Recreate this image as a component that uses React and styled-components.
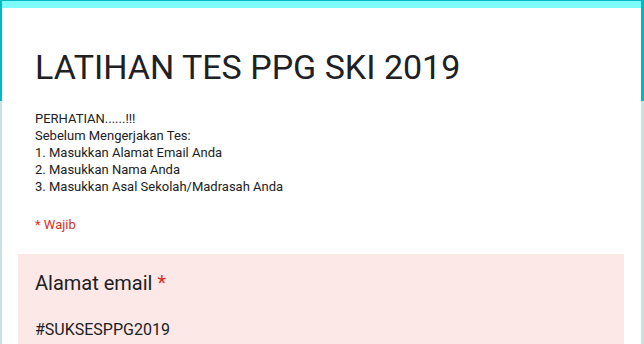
import React from "react"
import styled, { createGlobalStyle } from "styled-components"

const GlobalStyle = createGlobalStyle`
  html, body {
    margin: 0;
    padding: 0;
  }
  body {
    font-family: Roboto, "Noto Sans", Arial, sans-serif;
    background: linear-gradient(to bottom, #00b8cc 0, #00b8cc 101px, #c6e2e7 101px);
    min-height: 344px;
    overflow: hidden;
  }
`

const Page = styled.div`
  padding: 1px 3px 0 2px;
`

const Card = styled.div`
  background: #ffffff;
  border-top: 7px solid #7dfdff;
  padding-bottom: 30px;
`

const Header = styled.div`
  padding: 38px 32px 0 33px;
`

const Title = styled.h1`
  margin: 0;
  font-size: 34px;
  font-weight: 400;
  line-height: 42px;
  color: #202124;
`

const Desc = styled.div`
  margin-top: 22px;
  font-size: 13px;
  line-height: 17px;
  color: #202124;
  white-space: pre-line;
`

const Required = styled.div`
  margin-top: 21px;
  font-size: 13px;
  line-height: 17px;
  color: #d93025;
`

const Question = styled.div`
  margin: 21px 17px 0 16px;
  background: #fce8e6;
  padding: 17px 17px 24px 17px;
`

const QuestionTitle = styled.div`
  font-size: 20px;
  line-height: 24px;
  color: #202124;

  span {
    color: #d93025;
  }
`

const Answer = styled.div`
  margin-top: 25px;
  font-size: 16px;
  line-height: 20px;
  color: #202124;
`

const description = `PERHATIAN......!!!
Sebelum Mengerjakan Tes:
1. Masukkan Alamat Email Anda
2. Masukkan Nama Anda
3. Masukkan Asal Sekolah/Madrasah Anda`

export default function App() {
  return (
    <>
      <GlobalStyle />
      <Page>
        <Card>
          <Header>
            <Title>LATIHAN TES PPG SKI 2019</Title>
            <Desc>{description}</Desc>
            <Required>* Wajib</Required>
          </Header>
          <Question>
            <QuestionTitle>
              Alamat email <span>*</span>
            </QuestionTitle>
            <Answer>#SUKSESPPG2019</Answer>
          </Question>
        </Card>
      </Page>
    </>
  )
}
